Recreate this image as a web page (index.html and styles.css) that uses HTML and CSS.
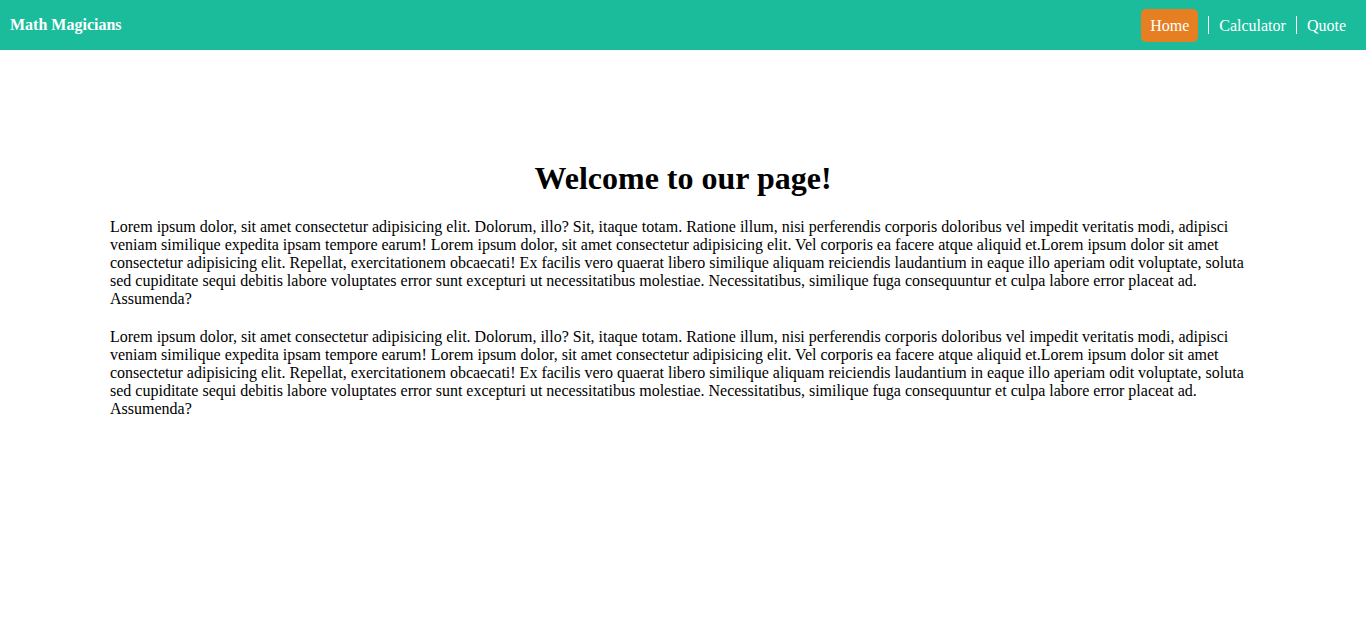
FILE: index.html
```html
<!DOCTYPE html>
<html lang="en">
<head>
<meta charset="utf-8">
<title>Math Magicians</title>
<link rel="stylesheet" href="styles.css">
</head>
<body>
<header class="navbar">
  <h2 class="brand">Math Magicians</h2>
  <ul class="nav-links">
    <li class="nav-item"><a class="nav-link active" href="#">Home</a></li>
    <li class="nav-item sep"><a class="nav-link" href="#">Calculator</a></li>
    <li class="nav-item sep"><a class="nav-link" href="#">Quote</a></li>
  </ul>
</header>
<main class="home">
  <h1 class="title">Welcome to our page!</h1>
  <p class="text">Lorem ipsum dolor, sit amet consectetur adipisicing elit. Dolorum, illo? Sit, itaque totam. Ratione illum, nisi perferendis corporis doloribus vel impedit veritatis modi, adipisci veniam similique expedita ipsam tempore earum! Lorem ipsum dolor, sit amet consectetur adipisicing elit. Vel corporis ea facere atque aliquid et.Lorem ipsum dolor sit amet consectetur adipisicing elit. Repellat, exercitationem obcaecati! Ex facilis vero quaerat libero similique aliquam reiciendis laudantium in eaque illo aperiam odit voluptate, soluta sed cupiditate sequi debitis labore voluptates error sunt excepturi ut necessitatibus molestiae. Necessitatibus, similique fuga consequuntur et culpa labore error placeat ad. Assumenda?</p>
  <p class="text">Lorem ipsum dolor, sit amet consectetur adipisicing elit. Dolorum, illo? Sit, itaque totam. Ratione illum, nisi perferendis corporis doloribus vel impedit veritatis modi, adipisci veniam similique expedita ipsam tempore earum! Lorem ipsum dolor, sit amet consectetur adipisicing elit. Vel corporis ea facere atque aliquid et.Lorem ipsum dolor sit amet consectetur adipisicing elit. Repellat, exercitationem obcaecati! Ex facilis vero quaerat libero similique aliquam reiciendis laudantium in eaque illo aperiam odit voluptate, soluta sed cupiditate sequi debitis labore voluptates error sunt excepturi ut necessitatibus molestiae. Necessitatibus, similique fuga consequuntur et culpa labore error placeat ad. Assumenda?</p>
</main>
</body>
</html>
```
FILE: styles.css
```css
* { box-sizing: border-box; }
body {
  margin: 0;
  font-family: "Liberation Serif", "Times New Roman", serif;
  font-size: 16px;
  color: #000;
  background: #fff;
}
.navbar {
  height: 50px;
  background: #1abc9c;
  display: flex;
  align-items: center;
  justify-content: space-between;
  padding: 0 20px 0 10px;
}
.brand {
  margin: 0;
  font-size: 16px;
  font-weight: bold;
  color: #fff;
}
.nav-links {
  list-style: none;
  margin: 0;
  padding: 0;
  display: flex;
  align-items: center;
}
.nav-item {
  display: flex;
  align-items: center;
}
.sep::before {
  content: "";
  display: block;
  width: 1px;
  height: 18px;
  background: #fff;
  margin: 0 10px 0 10px;
}
.nav-link {
  display: block;
  padding: 8px 0 7px;
  line-height: 18px;
  color: #fff;
  text-decoration: none;
  border-radius: 5px;
}
.nav-link.active {
  padding: 8px 9px 7px;
  background: #e67e22;
}
.home {
  padding: 89px 110px 0;
}
.title {
  text-align: center;
  font-size: 32px;
  margin: 21px 0;
}
.text {
  margin: 0 0 20px;
}
```
